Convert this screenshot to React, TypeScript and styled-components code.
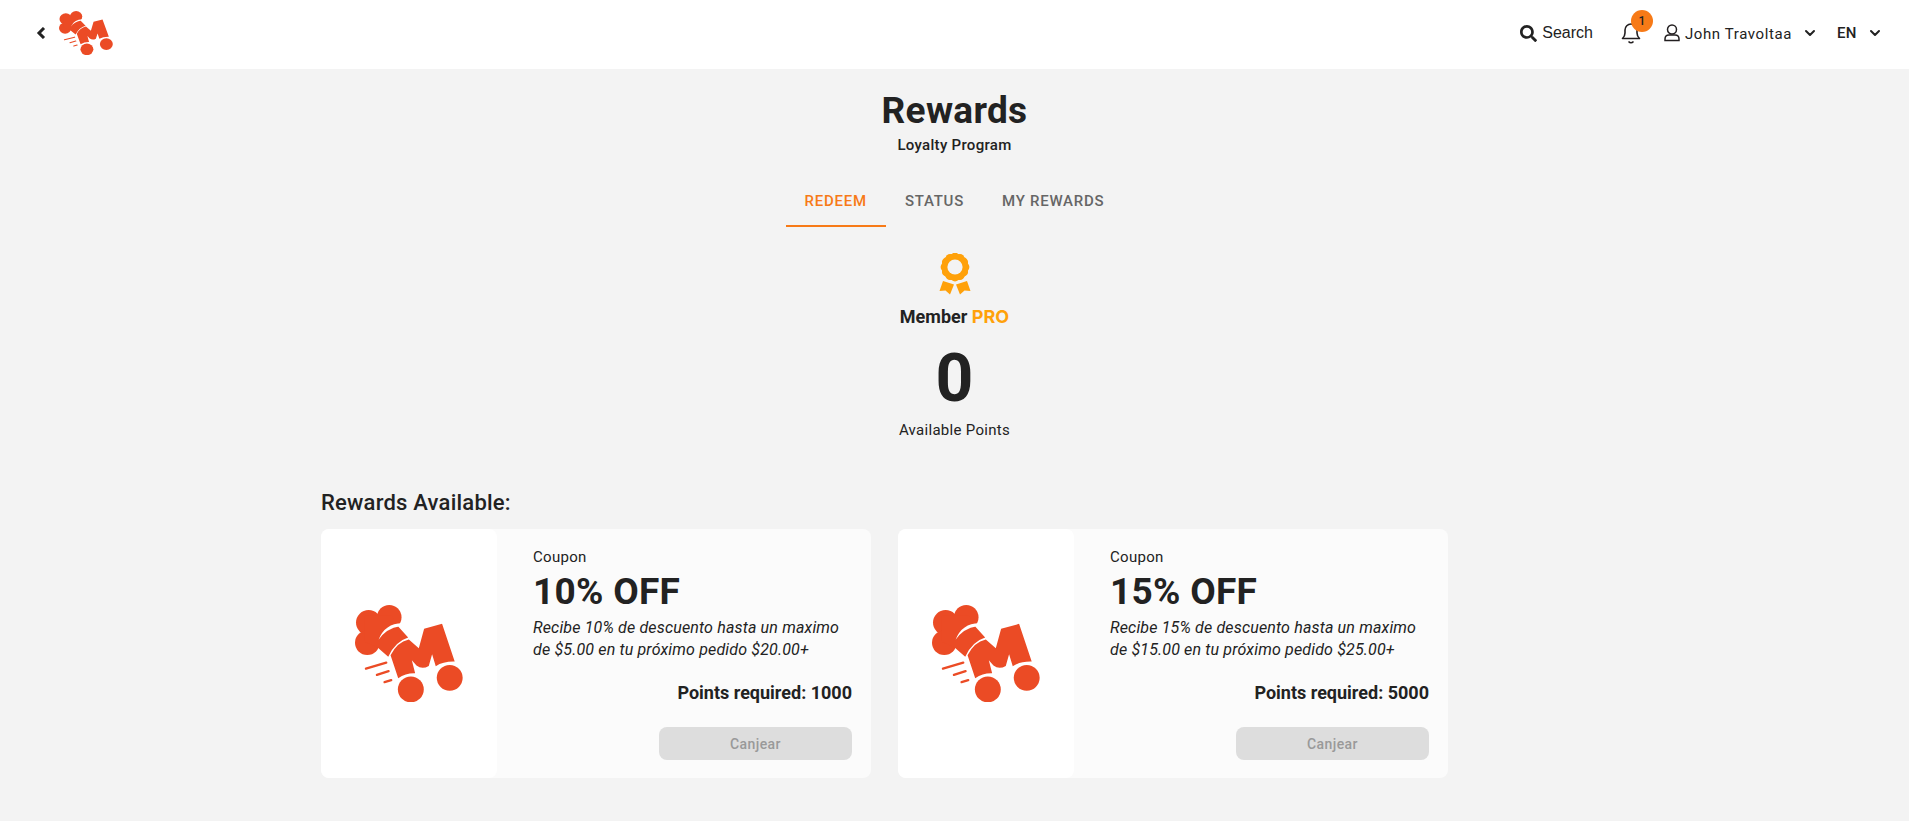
import React from "react";
import styled, { createGlobalStyle } from "styled-components";
import { FaSearch } from "react-icons/fa";
import { FiChevronDown } from "react-icons/fi";

const GlobalStyle = createGlobalStyle`
  *, *::before, *::after { box-sizing: border-box; }
  html { background: #f3f3f3; }
  body {
    margin: 0;
    color: #222;
    font-family: Roboto, "Liberation Sans", sans-serif;
    font-size: 15px;
    line-height: 22px;
    letter-spacing: 0.02em;
  }
  button, select { font: inherit; letter-spacing: inherit; color: inherit; border: 0; background: none; padding: 0; margin: 0; }
  h1, h2, h3, p { margin: 0; }
`;

const Header = styled.header`
  display: flex;
  align-items: center;
  justify-content: space-between;
  height: 69px;
  padding: 0 26px 3px 36px;
  background: #fff;
`;

const HeaderGroup = styled.div`
  display: flex;
  align-items: center;
`;

const BackButton = styled.button`
  display: flex;
  margin-right: 13px;
`;

const HomeLink = styled.a`
  display: flex;
`;

const SearchButton = styled.button`
  display: flex;
  align-items: center;
  gap: 5px;
  font-family: "Liberation Sans", Arial, sans-serif;
  font-size: 16px;
  letter-spacing: 0;
`;

const BellButton = styled.button`
  position: relative;
  display: flex;
  margin: 0 23px 0 28px;
`;

const Badge = styled.span`
  position: absolute;
  left: 10px;
  top: -12px;
  width: 22px;
  height: 22px;
  border-radius: 50%;
  background: #f77a17;
  font-size: 12px;
  font-weight: 500;
  text-align: center;
  letter-spacing: 0;
`;

const UserButton = styled.button`
  display: flex;
  align-items: center;
  gap: 5px;
  margin-right: 19px;
`;

const UserName = styled.span`
  padding-top: 2px;
  margin-right: 5px;
  letter-spacing: 0.04em;
`;

const LanguageField = styled.div`
  display: flex;
  align-items: center;
`;

const LanguageSelect = styled.select`
  appearance: none;
  width: 30px;
  font-weight: 500;
`;

const Main = styled.main`
  display: flex;
  flex-direction: column;
  align-items: center;
  padding: 20px 24px 43px;
`;

const Title = styled.h1`
  font-size: 37px;
  line-height: 44px;
  font-weight: 700;
`;

const Subtitle = styled.p`
  font-weight: 500;
  line-height: 24px;
`;

const Tabs = styled.div`
  display: flex;
  margin: 19px 0 26px;
`;

const Tab = styled.button<{ $active?: boolean }>`
  height: 51px;
  padding: 0 19px;
  border-bottom: 2px solid ${(p) => (p.$active ? "#f77a17" : "transparent")};
  color: ${(p) => (p.$active ? "#f77a17" : "#666")};
  font-weight: 500;
  letter-spacing: 0.05em;
  text-transform: uppercase;
`;

const Membership = styled.p`
  margin-top: 10px;
  font-size: 18px;
  line-height: 24px;
  font-weight: 700;
  letter-spacing: 0;
`;

const Tier = styled.span`
  color: #ffa10a;
  font-family: Inter, sans-serif;
`;

const Points = styled.strong`
  margin-top: 10px;
  font-size: 66px;
  line-height: 80px;
  font-weight: 700;
  letter-spacing: 0;
`;

const Available = styled.section`
  width: 100%;
  max-width: 1267px;
  margin-top: 48px;
`;

const SectionTitle = styled.h2`
  font-size: 22px;
  line-height: 28px;
  font-weight: 500;
  letter-spacing: 0.01em;
`;

const Cards = styled.div`
  display: grid;
  grid-template-columns: repeat(2, minmax(0, 550px));
  gap: 27px;
  margin-top: 12px;
`;

const Card = styled.article`
  display: flex;
  min-height: 249px;
  border-radius: 8px;
  background: #fbfbfb;
`;

const CardImage = styled.div`
  display: flex;
  align-items: center;
  justify-content: center;
  flex: 0 0 32%;
  border-radius: 8px;
  background: #fff;
`;

const CardBody = styled.div`
  display: flex;
  flex: 1;
  flex-direction: column;
  align-items: flex-start;
  padding: 17px 19px 18px 36px;
`;

const Discount = styled.h3`
  margin-bottom: 1px;
  font-size: 37px;
  line-height: 48px;
  font-weight: 700;
`;

const Description = styled.p`
  font-size: 16px;
  letter-spacing: 0.01em;
  font-style: italic;
`;

const Required = styled.p`
  align-self: flex-end;
  margin-top: 20px;
  font-size: 18px;
  line-height: 24px;
  font-weight: 700;
  letter-spacing: 0;
`;

const RedeemButton = styled.button`
  align-self: flex-end;
  width: 193px;
  height: 33px;
  margin-top: auto;
  border-radius: 8px;
  background: #ddd;
  color: #999;
  font-size: 14px;
  font-weight: 500;
  letter-spacing: 0.03em;
`;

const Logo = ({ width, height }: { width: number; height: number }) => (
  <svg width={width} height={height} viewBox="30 29 325 293" preserveAspectRatio="none" fill="#eb4b25" role="img" aria-label="Chef hat logo">
    <circle cx="71" cy="82" r="38" />
    <circle cx="133" cy="66" r="37" />
    <circle cx="67" cy="143" r="37" />
    <path d="M60 60L140 60L162 96L190 127Q151 139 130 185L98 157L60 140Z" />
    <path d="M172 84Q120 84 101 134Q124 99 166 93Z" fill="#fff" />
    <path d="M137 181Q156 141 192 133L222 160L238 101L292 86L330 200Q296 199 273 214L262 178L252 213Q232 225 215 212L201 196L211 235Q183 234 160 250Z" />
    <circle cx="198" cy="284" r="39" />
    <circle cx="315" cy="249" r="39" />
    <path d="M63 221L124 203M96 240L131 229M119 262L139 256" stroke="#eb4b25" strokeWidth="7" strokeLinecap="round" />
  </svg>
);

const scallops = Array.from({ length: 12 }, (_, i) => {
  const angle = (i * Math.PI) / 6;
  return { cx: 16 + 10 * Math.cos(angle), cy: 14 + 10 * Math.sin(angle) };
});

const Medal = () => (
  <svg width="32" height="42" viewBox="0 0 32 42" fill="#ffa10a" aria-hidden="true">
    {scallops.map((s, i) => (
      <circle key={i} cx={s.cx} cy={s.cy} r="4.4" />
    ))}
    <circle cx="16" cy="14" r="11" fill="none" stroke="#ffa10a" strokeWidth="5" />
    <circle cx="16" cy="14" r="7.600" fill="#f3f3f3" />
    <path d="M4 28L15 31.500L11 41.500L6.500 37.500L0.500 38ZM28 28L17 31.500L21 41.500L25.500 37.500L31.500 38Z" />
  </svg>
);

const rewards = [
  { name: "10% OFF", text: "Recibe 10% de descuento hasta un maximo de $5.00 en tu próximo pedido $20.00+", points: 1000 },
  { name: "15% OFF", text: "Recibe 15% de descuento hasta un maximo de $15.00 en tu próximo pedido $25.00+", points: 5000 },
];

export default function App() {
  return (
    <>
      <GlobalStyle />
      <Header>
        <HeaderGroup>
          <BackButton aria-label="Back">
            <svg width="10" height="12" viewBox="0 0 10 12" fill="none" stroke="#222" strokeWidth="3"><path d="M8 1L3 6L8 11" /></svg>
          </BackButton>
          <HomeLink href="#"><Logo width={54} height={44} /></HomeLink>
        </HeaderGroup>
        <HeaderGroup>
          <SearchButton><FaSearch size={17} />Search</SearchButton>
          <BellButton aria-label="Notifications, 1 new">
            <svg width="20" height="22" viewBox="0 0 20 22" fill="none" stroke="#231f20" strokeWidth="1.6" strokeLinejoin="round">
              <path d="M1.500 16.500Q4 14 4 11V8a6 6 0 0 1 12 0v3q0 3 2.500 5.500Z" />
              <path d="M7.500 19.500Q10 22 12.500 19.500" />
            </svg>
            <Badge>1</Badge>
          </BellButton>
          <UserButton>
            <svg width="16" height="18" viewBox="0 0 16 18" fill="none" stroke="#231f20" strokeWidth="1.5">
              <circle cx="8" cy="5.500" r="4.500" />
              <path d="M1 16.500v-1.500q0-4 4-4h6q4 0 4 4v1.500Z" />
            </svg>
            <UserName>John Travoltaa</UserName>
            <FiChevronDown size={16} strokeWidth={3} />
          </UserButton>
          <LanguageField>
            <LanguageSelect aria-label="Language" defaultValue="EN">
              <option>EN</option>
              <option>ES</option>
            </LanguageSelect>
            <FiChevronDown size={16} strokeWidth={3} />
          </LanguageField>
        </HeaderGroup>
      </Header>
      <Main>
        <Title>Rewards</Title>
        <Subtitle>Loyalty Program</Subtitle>
        <Tabs role="tablist">
          <Tab role="tab" aria-selected $active>Redeem</Tab>
          <Tab role="tab">Status</Tab>
          <Tab role="tab">My Rewards</Tab>
        </Tabs>
        <Medal />
        <Membership>Member <Tier>PRO</Tier></Membership>
        <Points>0</Points>
        <p>Available Points</p>
        <Available>
          <SectionTitle>Rewards Available:</SectionTitle>
          <Cards>
            {rewards.map((r) => (
              <Card key={r.points}>
                <CardImage><Logo width={108} height={97} /></CardImage>
                <CardBody>
                  <p>Coupon</p>
                  <Discount>{r.name}</Discount>
                  <Description>{r.text}</Description>
                  <Required>Points required: {r.points}</Required>
                  <RedeemButton disabled>Canjear</RedeemButton>
                </CardBody>
              </Card>
            ))}
          </Cards>
        </Available>
      </Main>
    </>
  );
}
